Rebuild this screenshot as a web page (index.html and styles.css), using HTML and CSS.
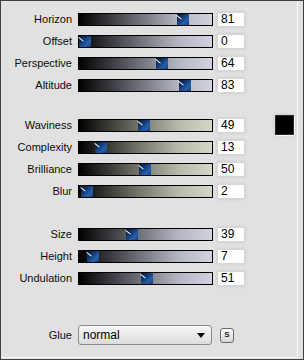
FILE: index.html
```html
<!DOCTYPE html>
<html lang="en">
<head>
  <meta charset="UTF-8">
  <title>Wave settings</title>
  <link rel="stylesheet" href="styles.css">
</head>
<body>
  <div class="janela">
    <div class="painel">
      <div class="grupo azul">
        <div class="linha"><span class="rotulo">Horizon</span><div class="trilho"><div class="cursor" style="left:98px"></div></div><span class="valor">81</span></div>
        <div class="linha"><span class="rotulo">Offset</span><div class="trilho"><div class="cursor" style="left:0px"></div></div><span class="valor">0</span></div>
        <div class="linha"><span class="rotulo">Perspective</span><div class="trilho"><div class="cursor" style="left:77px"></div></div><span class="valor">64</span></div>
        <div class="linha"><span class="rotulo">Altitude</span><div class="trilho"><div class="cursor" style="left:100px"></div></div><span class="valor">83</span></div>
      </div>
      <div class="grupo bege">
        <div class="linha"><span class="rotulo">Waviness</span><div class="trilho"><div class="cursor" style="left:59px"></div></div><span class="valor">49</span><span class="cor"></span></div>
        <div class="linha"><span class="rotulo">Complexity</span><div class="trilho"><div class="cursor" style="left:16px"></div></div><span class="valor">13</span></div>
        <div class="linha"><span class="rotulo">Brilliance</span><div class="trilho"><div class="cursor" style="left:60px"></div></div><span class="valor">50</span></div>
        <div class="linha"><span class="rotulo">Blur</span><div class="trilho"><div class="cursor" style="left:2px"></div></div><span class="valor">2</span></div>
      </div>
      <div class="grupo azul">
        <div class="linha"><span class="rotulo">Size</span><div class="trilho"><div class="cursor" style="left:47px"></div></div><span class="valor">39</span></div>
        <div class="linha"><span class="rotulo">Height</span><div class="trilho"><div class="cursor" style="left:8px"></div></div><span class="valor">7</span></div>
        <div class="linha"><span class="rotulo">Undulation</span><div class="trilho"><div class="cursor" style="left:62px"></div></div><span class="valor">51</span></div>
      </div>
      <div class="linha cola">
        <span class="rotulo">Glue</span>
        <div class="selecao">
          <span>normal</span>
          <svg viewBox="0 0 8 5" width="8" height="5"><path d="M0 0H8L4 5Z" fill="#000"/></svg>
        </div>
        <button class="botao-s">S</button>
      </div>
    </div>
  </div>
</body>
</html>
```

FILE: styles.css
```css
body {
  margin: 0;
  font-family: "Liberation Sans", Arial, sans-serif;
  background: #e1e1e1;
}
.janela {
  width: 304px;
  height: 360px;
  box-sizing: border-box;
  border: 1px solid #3f3f3f;
  background: #e1e1e1;
  padding: 1px;
}
.painel {
  height: 100%;
  box-sizing: border-box;
  border-right: 1px solid #f6f6f6;
  border-bottom: 1px solid #f6f6f6;
  width: 296px;
  padding-top: 6px;
}
.grupo + .grupo {
  margin-top: 18px;
}
.grupo:nth-child(3) {
  margin-top: 21px;
}
.linha {
  display: flex;
  align-items: center;
  height: 22px;
}
.rotulo {
  width: 64px;
  margin-left: 6px;
  margin-right: 6px;
  text-align: right;
  font-size: 11px;
  color: #0c0c0c;
}
.trilho {
  position: relative;
  width: 133px;
  height: 11px;
  border: 1px solid #000;
}
.azul .trilho {
  background: linear-gradient(90deg, #000 0%, #6e7079 45%, #b4b7c3 75%, #d0d3df 100%);
}
.bege .trilho {
  background: linear-gradient(90deg, #000 0%, #75756b 45%, #b9baab 75%, #d5d7c6 100%);
}
.cursor {
  position: absolute;
  top: 0;
  width: 12px;
  height: 11px;
  background: linear-gradient(135deg, #06142c 0%, #143a74 40%, #2560ad 70%, #143e7a 100%);
}
.cursor::before {
  content: "";
  position: absolute;
  left: 0;
  top: 1px;
  width: 6px;
  height: 1px;
  background: #fff;
  transform: rotate(38deg);
  transform-origin: 0 0;
}
.valor {
  width: 23px;
  height: 13px;
  margin-left: 4px;
  padding-left: 3px;
  background: #fff;
  border: 1px solid #d6d6d6;
  box-shadow: 0 0 3px rgba(0,0,0,0.12);
  font-size: 12px;
  line-height: 13px;
  color: #000;
}
.cor {
  width: 17px;
  height: 18px;
  margin-left: 30px;
  background: #000;
  border: 1px solid #2a2a2a;
  box-shadow: 1px 1px 0 #fafafa, 0 0 3px rgba(0,0,0,0.15);
}
.cola {
  margin-top: 35px;
}
.selecao {
  width: 122px;
  height: 18px;
  padding: 0 6px 0 4px;
  display: flex;
  align-items: center;
  justify-content: space-between;
  border: 1px solid #8c8c8c;
  border-radius: 3px;
  background: linear-gradient(#f7f7f7, #dcdcdc);
  font-size: 12px;
  color: #000;
}
.botao-s {
  width: 14px;
  height: 15px;
  margin-left: 8px;
  padding: 0;
  border: 1px solid #6a6a6a;
  border-radius: 3px;
  background: linear-gradient(#fafafa, #d8d8d8);
  font-family: "Liberation Sans", Arial, sans-serif;
  font-size: 8px;
  font-weight: bold;
  color: #222;
  line-height: 12px;
}
```
